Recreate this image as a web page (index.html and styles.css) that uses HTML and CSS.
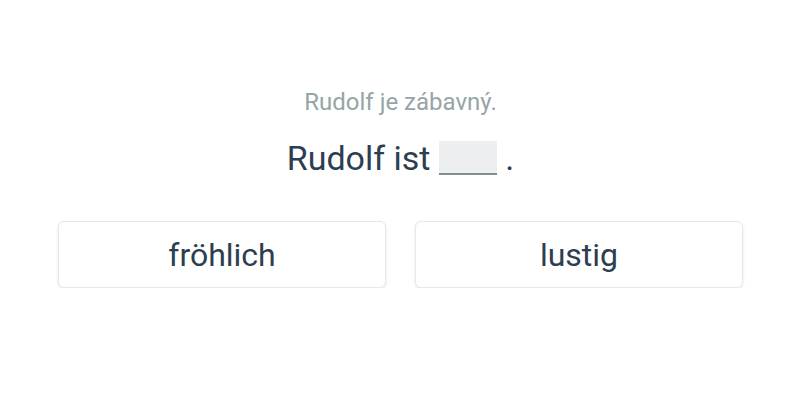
FILE: index.html
```html
<!DOCTYPE html>
<html>
<head>
<meta charset="utf-8">
<link rel="stylesheet" href="styles.css">
</head>
<body>
<main class="exercise">
  <p class="hint">Rudolf je zábavný.</p>
  <p class="sentence">Rudolf ist <span class="blank"></span> .</p>
  <div class="choices">
    <button class="choice">fröhlich</button>
    <button class="choice">lustig</button>
  </div>
</main>
</body>
</html>
```

FILE: styles.css
```css
html, body {
  margin: 0;
  padding: 0;
  background: #ffffff;
  font-family: Roboto, "Noto Sans", sans-serif;
}

.exercise {
  display: flex;
  flex-direction: column;
  align-items: center;
  padding: 86px 57px 0 58px;
}

.hint {
  margin: 0;
  font-size: 24px;
  line-height: 32px;
  color: #95a5a6;
}

.sentence {
  margin: 20px 0 0;
  font-size: 34px;
  line-height: 40px;
  color: #2c3e50;
}

.blank {
  display: inline-block;
  width: 58px;
  height: 32px;
  background: #eceef0;
  border-bottom: 2px solid #7f9094;
  vertical-align: -5px;
}

.choices {
  margin-top: 43px;
  display: grid;
  grid-template-columns: 1fr 1fr;
  gap: 29px;
  width: 100%;
}

.choice {
  height: 67px;
  background: #ffffff;
  border: 1px solid #e6e8ea;
  border-radius: 6px;
  box-shadow: 0 1px 3px rgba(0, 0, 0, 0.1);
  font-family: Roboto, "Noto Sans", sans-serif;
  font-size: 32px;
  color: #2c3e50;
  padding: 0;
  cursor: pointer;
}
```
